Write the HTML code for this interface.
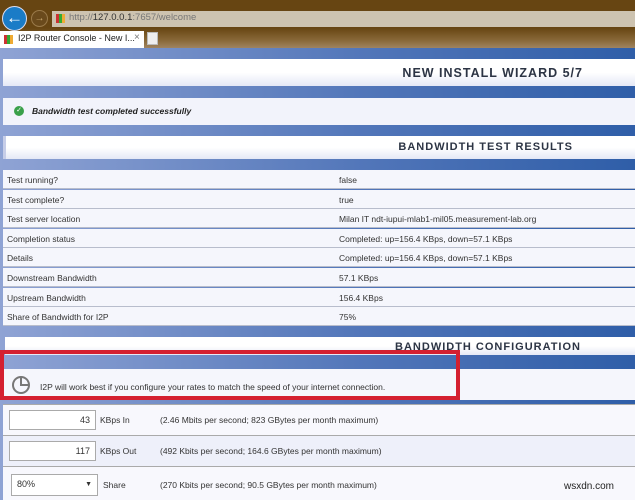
<!DOCTYPE html>
<html><head><style>
*{margin:0;padding:0;box-sizing:border-box}
body{width:635px;height:500px;overflow:hidden;position:relative;font-family:"Liberation Sans",sans-serif;background:linear-gradient(90deg,#8fa3d4,#4f74b8 60%,#2f5ea8);}
.a{position:absolute}
.box{position:absolute;background:linear-gradient(#fff 50%,#e4e8f6);}
.h{font-weight:bold;color:#2c3444;letter-spacing:1px;font-size:12px;white-space:nowrap}
.row{position:absolute;left:3px;width:632px;height:19px;background:#f5f6fc;border-bottom:1px solid #b8bdcc;font-size:8.5px;color:#333}
.row span{position:absolute;top:5px}
.frow{position:absolute;left:3px;width:632px;background:#f8f8fd;border-top:1px solid #aaa;font-size:8.5px;color:#333}
.inp{position:absolute;left:6px;width:87px;height:20px;border:1px solid #aaa;background:#fff;text-align:right;padding:4px 5px;font-size:9px}
</style></head><body>
<div class="a" style="left:0;top:0;width:635px;height:48px;background:linear-gradient(#674512 0,#674512 58%,#8a6a3a 85%,#a08460)"></div>
<div class="a" style="left:52px;top:11px;width:583px;height:16px;background:#cdc3b0"></div>
<div class="a" style="left:2px;top:6px;width:25px;height:25px;border-radius:50%;background:#1a7cc7;border:1px solid #dde;color:#fff;font-size:17px;line-height:22px;text-align:center;font-weight:bold">&#8592;</div>
<div class="a" style="left:31px;top:10px;width:17px;height:17px;border-radius:50%;background:#6a4a1c;border:1px solid #9a7a4a;color:#c8a870;font-size:10px;line-height:15px;text-align:center">&#8594;</div>
<div class="a" style="left:56px;top:14px;width:9px;height:9px;background:repeating-linear-gradient(90deg,#c33 0 3px,#3a3 3px 6px,#ea3 6px 9px)"></div>
<div class="a" style="left:69px;top:12px;font-size:9.5px;color:#777">http://<b style="color:#333;font-weight:normal">127.0.0.1</b>:7657/welcome</div>
<div class="a" style="left:0;top:31px;width:144px;height:17px;background:#fff"></div>
<div class="a" style="left:4px;top:35px;width:9px;height:9px;background:repeating-linear-gradient(90deg,#c33 0 3px,#3a3 3px 6px,#ea3 6px 9px)"></div>
<div class="a" style="left:18px;top:33px;font-size:9px;color:#222;white-space:nowrap">I2P Router Console - New I...</div>
<div class="a" style="left:134px;top:32px;font-size:10px;color:#777">×</div>
<div class="a" style="left:147px;top:32px;width:11px;height:13px;background:#eee;border:1px solid #bbb"></div>

<div class="box" style="left:3px;top:59px;width:632px;height:27px"><div class="a h" style="right:52px;top:7px;font-size:12.5px">NEW INSTALL WIZARD 5/7</div></div>
<div class="a" style="left:3px;top:98px;width:632px;height:27px;background:#f2f3fb"></div>
<div class="a" style="left:14px;top:106px;width:10px;height:10px;border-radius:50%;background:#3aa04a;color:#fff;font-size:7px;line-height:10px;text-align:center">✓</div>
<div class="a" style="left:32px;top:106px;font-size:8.5px;font-weight:bold;font-style:italic;color:#222">Bandwidth test completed successfully</div>
<div class="box" style="left:3px;top:136px;width:632px;height:23px;border-left:3px solid #c6cde8"><div class="a h" style="right:62px;top:5px;font-size:11px">BANDWIDTH TEST RESULTS</div></div>

<div class="row" style="top:170px"><span style="left:4px">Test running?</span><span style="left:336px">false</span></div>
<div class="row" style="top:190px"><span style="left:4px">Test complete?</span><span style="left:336px">true</span></div>
<div class="row" style="top:209px"><span style="left:4px">Test server location</span><span style="left:336px">Milan IT ndt-iupui-mlab1-mil05.measurement-lab.org</span></div>
<div class="row" style="top:229px"><span style="left:4px">Completion status</span><span style="left:336px">Completed: up=156.4 KBps, down=57.1 KBps</span></div>
<div class="row" style="top:248px"><span style="left:4px">Details</span><span style="left:336px">Completed: up=156.4 KBps, down=57.1 KBps</span></div>
<div class="row" style="top:268px"><span style="left:4px">Downstream Bandwidth</span><span style="left:336px">57.1 KBps</span></div>
<div class="row" style="top:288px"><span style="left:4px">Upstream Bandwidth</span><span style="left:336px">156.4 KBps</span></div>
<div class="row" style="top:307px"><span style="left:4px">Share of Bandwidth for I2P</span><span style="left:336px">75%</span></div>

<div class="box" style="left:5px;top:337px;width:630px;height:18px"><div class="a h" style="right:54px;top:4px;font-size:11px">BANDWIDTH CONFIGURATION</div></div>
<div class="a" style="left:3px;top:369px;width:632px;height:31px;background:#f5f6fc"></div>
<div class="a" style="left:12px;top:376px;width:18px;height:18px;border:2px solid #777;border-radius:50%"></div>
<div class="a" style="left:20px;top:378px;width:8px;height:8px;border-left:2px solid #777;border-bottom:2px solid #777"></div>
<div class="a" style="left:40px;top:382px;font-size:8.5px;color:#333">I2P will work best if you configure your rates to match the speed of your internet connection.</div>
<div class="a" style="left:0;top:350px;width:460px;height:50px;border:4px solid #d42030"></div>

<div class="frow" style="top:404px;height:31px"><div class="inp" style="top:5px">43</div><span class="a" style="left:97px;top:10px">KBps In</span><span class="a" style="left:157px;top:10px">(2.46 Mbits per second; 823 GBytes per month maximum)</span></div>
<div class="frow" style="top:435px;height:31px;background:#eef0fa"><div class="inp" style="top:5px">117</div><span class="a" style="left:97px;top:10px">KBps Out</span><span class="a" style="left:157px;top:10px">(492 Kbits per second; 164.6 GBytes per month maximum)</span></div>
<div class="frow" style="top:466px;height:34px"><div class="inp" style="top:7px;left:8px;text-align:left;height:22px">80%<span style="position:absolute;right:5px;font-size:7px;top:6px">▼</span></div><span class="a" style="left:100px;top:13px">Share</span><span class="a" style="left:157px;top:13px">(270 Kbits per second; 90.5 GBytes per month maximum)</span><span class="a" style="left:561px;top:14px;font-size:10px;color:#222">wsxdn.com</span></div>
</body></html>
